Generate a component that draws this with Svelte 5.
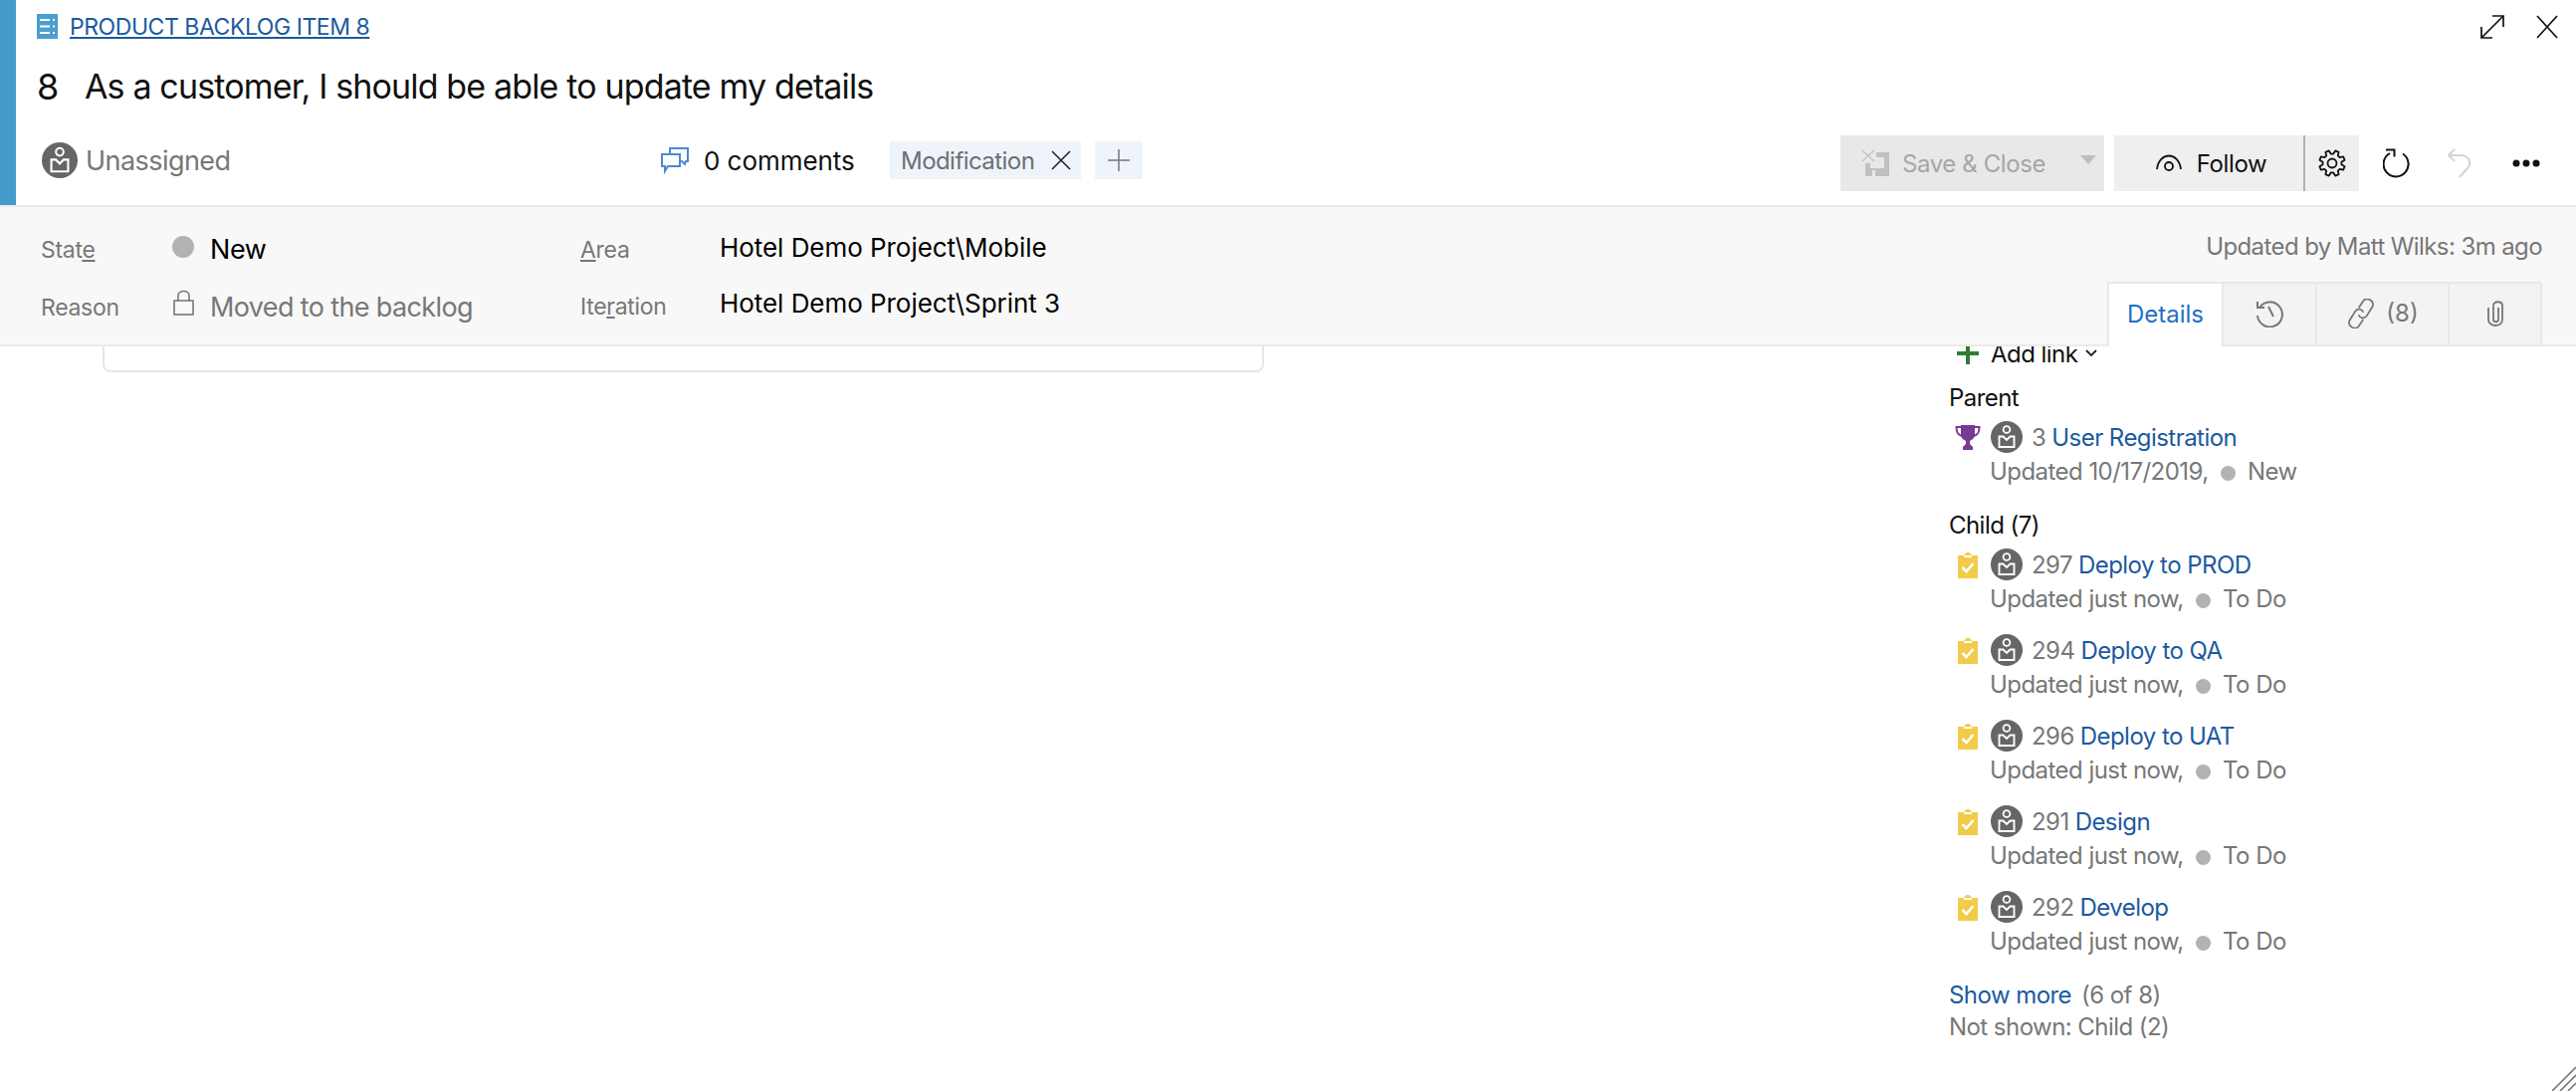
<script>
  const children = [
    { id: 297, title: 'Deploy to PROD' },
    { id: 294, title: 'Deploy to QA' },
    { id: 296, title: 'Deploy to UAT' },
    { id: 291, title: 'Design' },
    { id: 292, title: 'Develop' },
  ];

  // eight teeth round the centre of a 28 box
  const gearPoints = [];
  for (let i = 0; i < 8; i++) {
    const a = (i * 45 + 22.5);
    for (const [r, d] of [[9.5, -15], [13, -8], [13, 8], [9.5, 15]]) {
      const t = ((a + d) * Math.PI) / 180;
      gearPoints.push(`${(14 + r * Math.cos(t)).toFixed(2)},${(14 + r * Math.sin(t)).toFixed(2)}`);
    }
  }
  const gear = gearPoints.join(' ');
</script>

{#snippet avatar(size)}
  <svg class="avatar" width={size} height={size} viewBox="0 0 32 32">
    <circle cx="16" cy="16" r="16" fill="#666" />
    <circle cx="16" cy="8.500" r="3.400" fill="none" stroke="#fff" stroke-width="1.800" />
    <path d="M8.500 15.500h4l3.500 3.500 3.500-3.500h4v10.500h-15z" fill="none" stroke="#fff" stroke-width="1.900" />
  </svg>
{/snippet}

{#snippet task()}
  <svg class="type-icon" width="22" height="28" viewBox="0 0 22 28">
    <path d="M1 5h6l1-1.500C9 1.500 13 1.500 14 3.500L15 5h6v23H1z" fill="#f2cb4a" />
    <rect x="7" y="5" width="8" height="2" fill="#fff" />
    <path d="M5.500 17l4 4 7-8" fill="none" stroke="#fff" stroke-width="2.600" />
  </svg>
{/snippet}

<div class="page">
  <header class="top">
    <div class="type-row">
      <svg width="21" height="25" viewBox="0 0 21 25">
        <rect width="21" height="25" fill="#4a9fcf" />
        <path d="M3 6h10M3 12.500h10M3 19h10M16 6h2M16 12.500h2M16 19h2" stroke="#fff" stroke-width="1.800" />
      </svg>
      <a class="type-link">PRODUCT BACKLOG ITEM 8</a>
      <div class="window-btns">
        <svg width="26" height="26" viewBox="0 0 26 26" fill="none" stroke="#111" stroke-width="1.700">
          <path d="M2 24L24 2M13 2h11v11M2 13v11h11" />
        </svg>
        <svg width="24" height="24" viewBox="0 0 24 24" fill="none" stroke="#111" stroke-width="1.700">
          <path d="M2 1l20 22M22 1L2 23" />
        </svg>
      </div>
    </div>

    <div class="title-row">
      <span class="item-id">8</span>
      <span class="item-title">As a customer, I should be able to update my details</span>
    </div>

    <div class="action-row">
      <div class="assigned">
        {@render avatar(36)}
        <span>Unassigned</span>
      </div>
      <div class="comments">
        <svg width="28" height="27" viewBox="0 0 28 27" fill="none" stroke="#4a8ad4" stroke-width="2">
          <path d="M9 7V1h18v13h-2l-1 3-3-3h-2" />
          <path d="M1 7h18v12H7l-3 5v-5H1z" />
        </svg>
        <span>0 comments</span>
      </div>
      <div class="tag">
        <span>Modification</span>
        <svg width="20" height="20" viewBox="0 0 20 20" fill="none" stroke="#222" stroke-width="1.600">
          <path d="M1 1l18 18M19 1L1 19" />
        </svg>
      </div>
      <div class="tag-add">
        <svg width="24" height="24" viewBox="0 0 24 24" fill="none" stroke="#777" stroke-width="1.500">
          <path d="M12 1v22M1 12h22" />
        </svg>
      </div>

      <div class="toolbar">
        <div class="btn save">
          <svg width="30" height="28" viewBox="0 0 30 28">
            <path d="M2 1l12 11M14 1L2 12" stroke="#c4c4c4" stroke-width="1.500" fill="none" />
            <path d="M16 3h13v24H5V14h5v5h14V8h-8z" fill="#c0c0c0" />
            <rect x="12" y="21" width="3" height="6" fill="#e8e8e8" />
          </svg>
          <span>Save &amp; Close</span>
          <i class="caret"></i>
        </div>
        <div class="btn follow">
          <div class="follow-main">
            <svg width="28" height="20" viewBox="0 0 28 20" fill="none" stroke="#111" stroke-width="1.800">
              <path d="M2 16C4 -2 24 -2 26 16" />
              <circle cx="14" cy="13" r="4" />
            </svg>
            <span>Follow</span>
          </div>
          <div class="follow-gear">
            <svg width="28" height="28" viewBox="0 0 28 28" fill="none" stroke="#111" stroke-width="1.800" stroke-linejoin="round">
              <polygon points={gear} />
              <circle cx="14" cy="14" r="4.500" />
            </svg>
          </div>
        </div>
        <svg class="tool-icon" width="30" height="30" viewBox="0 0 30 30" fill="none" stroke="#111" stroke-width="2">
          <path d="M20 5.500A12.500 12.500 0 1 1 7 5" />
          <path d="M4 1.500h8.500v7" transform="translate(-1 0)" />
        </svg>
        <svg class="tool-icon undo" width="26" height="30" viewBox="0 0 26 30" fill="none" stroke="#d4d4d4" stroke-width="2">
          <path d="M2 7h12c8 0 12 8 7 13l-8 9" />
          <path d="M8 1L2 7l6 6" />
        </svg>
        <svg class="tool-icon more" width="28" height="8" viewBox="0 0 28 8" fill="#111">
          <circle cx="4" cy="4" r="3.500" /><circle cx="14" cy="4" r="3.500" /><circle cx="24" cy="4" r="3.500" />
        </svg>
      </div>
    </div>
  </header>

  <section class="fields">
    <div class="field-grid">
      <span class="label">Stat<u>e</u></span>
      <i class="dot big"></i>
      <span class="value">New</span>
      <span class="label">
        <u>A</u>rea
      </span>
      <span class="value path first">Hotel Demo Project\Mobile</span>

      <span class="label">Reason</span>
      <svg class="lock" width="21" height="26" viewBox="0 0 21 26" fill="none" stroke="#777" stroke-width="1.600">
        <rect x="1" y="11" width="19" height="14" />
        <path d="M5 11V6c0-6 11-6 11 0v5" />
      </svg>
      <span class="value muted">Moved to the backlog</span>
      <span class="label iteration">Ite<u>r</u>ation</span>
      <span class="value path second">Hotel Demo Project\Sprint 3</span>
    </div>

    <div class="field-side">
      <span class="updated">Updated by Matt Wilks: 3m ago</span>
      <div class="tabs">
        <div class="tab active">Details</div>
        <div class="tab history">
          <svg width="28" height="28" viewBox="0 0 28 28" fill="none" stroke="#777" stroke-width="2">
            <path d="M4 8A12.500 12.500 0 1 1 2 16" />
            <path d="M2 2v6h7M13 7l5 10" />
          </svg>
        </div>
        <div class="tab links">
          <svg width="30" height="30" viewBox="3 2 24 26" fill="none" stroke="#777" stroke-width="1.500">
            <path d="M13 10l4-6c3-4 10 0 8 5l-5 8c-2 3-6 2-7-1" />
            <path d="M17 20l-4 6c-3 4-10 0-8-5l5-8c2-3 6-2 7 1" />
          </svg>
          <span>(8)</span>
        </div>
        <div class="tab clip">
          <svg width="16" height="26" viewBox="0 0 16 26" fill="none" stroke="#777" stroke-width="1.800">
            <path d="M11 7v12c0 3-5 3-5 0V5c0-5 9-5 9 0v14c0 8-14 8-14 0V7" />
          </svg>
        </div>
      </div>
    </div>
  </section>

  <main class="content">
    <div class="form-col">
      <div class="card-end"></div>
    </div>
    <aside class="links-col">
      <div class="add-link">
        <svg width="22" height="22" viewBox="0 0 22 22" fill="none" stroke="#2f7d32" stroke-width="4">
          <path d="M11 0v22M0 11h22" />
        </svg>
        <span>Add link</span>
        <svg width="12" height="8" viewBox="0 0 12 8" fill="none" stroke="#222" stroke-width="1.800">
          <path d="M1 1l5 5 5-5" />
        </svg>
      </div>

      <h3 class="group parent">Parent</h3>
      <div class="link-item">
        <div class="link-top">
          <svg class="type-icon trophy" width="26" height="26" viewBox="0 0 26 26">
            <path d="M6 1h14v10c0 3-3 5-5 6v3l3 3v3H8v-3l3-3v-3c-2-1-5-3-5-6z" fill="#773b93" />
            <path d="M6 3H1.500c0 5 1 8 6 9M20 3h4.500c0 5-1 8-6 9" fill="none" stroke="#773b93" stroke-width="2" />
          </svg>
          {@render avatar(32)}
          <span class="num">3</span>
          <a class="link-name">User Registration</a>
        </div>
        <div class="link-sub">Updated 10/17/2019, <i class="dot"></i> New</div>
      </div>

      <h3 class="group child">Child (7)</h3>
      {#each children as c}
        <div class="link-item">
          <div class="link-top">
            {@render task()}
            {@render avatar(32)}
            <span class="num">{c.id}</span>
            <a class="link-name">{c.title}</a>
          </div>
          <div class="link-sub">Updated just now, <i class="dot"></i> To Do</div>
        </div>
      {/each}

      <div class="show-more"><a class="link-name">Show more</a><span>(6 of 8)</span></div>
      <div class="not-shown">Not shown: Child (2)</div>
    </aside>
  </main>

  <svg class="grip" width="26" height="26" viewBox="0 0 26 26" stroke="#777" stroke-width="1.600">
    <path d="M2 26L26 2M10 26L26 10M18 26l8-8" />
  </svg>
</div>

<style>
  :global(body) {
    margin: 0;
    background: #fff;
    font-family: Inter, "Liberation Sans", sans-serif;
    color: #111;
    overflow: hidden;
  }
  .page {
    position: relative;
    height: 1096px;
    overflow: hidden;
  }
  a {
    cursor: pointer;
  }
  .top {
    box-sizing: border-box;
    height: 206px;
    padding-left: 21px;
    border-left: 16px solid #439cca;
    position: relative;
    z-index: 2;
    background: #fff;
  }
  .type-row {
    display: flex;
    align-items: center;
    gap: 12px;
    height: 53px;
  }
  .type-link {
    font-size: 23px;
    color: #1c5a9f;
    text-decoration: underline;
    letter-spacing: -0.45px;
  }
  .window-btns {
    margin-left: auto;
    display: flex;
    align-items: center;
    gap: 30px;
    padding-right: 17px;
  }
  .title-row {
    display: flex;
    align-items: center;
    height: 67px;
    font-size: 34px;
    letter-spacing: -0.85px;
  }
  .item-id {
    width: 48px;
    font-size: 36px;
  }
  .action-row {
    display: flex;
    align-items: center;
    height: 56px;
    margin-top: 16px;
  }
  .assigned {
    display: flex;
    align-items: center;
    gap: 8px;
    width: 622px;
    margin-left: 5px;
    margin-bottom: 6px;
    font-size: 27px;
    letter-spacing: -0.55px;
    color: #777;
    flex: none;
  }
  .comments {
    display: flex;
    align-items: center;
    gap: 15px;
    width: 230px;
    flex: none;
    margin-bottom: 6px;
    font-size: 26px;
    letter-spacing: -0.05px;
  }
  .tag {
    display: flex;
    align-items: center;
    gap: 17px;
    box-sizing: border-box;
    height: 38px;
    width: 192px;
    padding-left: 11px;
    margin-bottom: 6px;
    background: #eff4fb;
    font-size: 24px;
    letter-spacing: -0.55px;
    color: #6d6f72;
    flex: none;
  }
  .tag-add {
    display: flex;
    align-items: center;
    justify-content: center;
    width: 48px;
    height: 38px;
    margin-left: 14px;
    margin-bottom: 6px;
    background: #eff4fb;
    flex: none;
  }
  .toolbar {
    margin-left: auto;
    display: flex;
    align-items: center;
    gap: 10px;
    padding-right: 36px;
  }
  .btn {
    display: flex;
    align-items: center;
    height: 56px;
    background: #efefef;
    font-size: 24px;
    letter-spacing: -0.4px;
    flex: none;
  }
  .save {
    box-sizing: border-box;
    width: 265px;
    padding-left: 20px;
    gap: 12px;
    background: #e8e8e8;
    color: #a6a6a6;
    white-space: nowrap;
  }
  .caret {
    width: 0;
    height: 0;
    margin-left: 23px;
    margin-top: -8px;
    border-left: 8px solid transparent;
    border-right: 8px solid transparent;
    border-top: 9px solid #bdbdbd;
  }
  .follow {
    width: 246px;
  }
  .follow-main {
    display: flex;
    align-items: center;
    justify-content: center;
    gap: 14px;
    box-sizing: border-box;
    width: 192px;
    height: 100%;
    padding-left: 4px;
    border-right: 2px solid #b0b0b0;
  }
  .follow-gear {
    flex: 1;
    display: flex;
    align-items: center;
    justify-content: center;
  }
  .tool-icon {
    flex: none;
    margin-left: 14px;
  }
  .undo {
    margin-left: 24px;
    margin-right: 22px;
  }
  .more {
    margin-left: 8px;
  }
  .fields {
    box-sizing: border-box;
    height: 142px;
    display: flex;
    justify-content: space-between;
    background: #f8f8f8;
    border-top: 2px solid #ebebeb;
    border-bottom: 2px solid #ebebeb;
    position: relative;
    z-index: 2;
  }
  .field-grid {
    display: grid;
    grid-template-columns: 131px 39px 372px 140px auto;
    grid-auto-rows: 58px;
    align-items: center;
    padding: 13px 0 0 41px;
    align-self: flex-start;
  }
  .label {
    font-size: 23px;
    letter-spacing: -0.3px;
    color: #777;
    padding-top: 2px;
  }
  .iteration {
    padding-top: 0;
  }
  .value {
    font-size: 27px;
    letter-spacing: -0.4px;
    color: #000;
  }
  .muted {
    color: #777;
    letter-spacing: -0.63px;
  }
  .path {
    font-size: 26px;
    letter-spacing: -0.05px;
  }
  .first {
    margin-bottom: 4px;
  }
  .second {
    margin-bottom: 8px;
  }
  .dot {
    display: inline-block;
    width: 15px;
    height: 15px;
    border-radius: 50%;
    background: #b2b2b2;
    vertical-align: -1px;
    margin: 0 6px;
  }
  .dot.big {
    width: 22px;
    height: 22px;
    margin: -4px 0 0 1px;
  }
  .lock {
    margin: -8px 0 0 2px;
  }
  .field-side {
    display: flex;
    flex-direction: column;
    align-items: flex-end;
    padding-right: 34px;
    margin-bottom: -2px;
  }
  .updated {
    margin-top: 25px;
    height: 48px;
    font-size: 24px;
    letter-spacing: -0.6px;
    color: #777;
  }
  .tabs {
    margin-top: auto;
    display: flex;
    height: 65px;
    color: #777;
    font-size: 24px;
  }
  .tab {
    box-sizing: border-box;
    display: flex;
    align-items: center;
    justify-content: center;
    gap: 10px;
    background: #f3f3f3;
    border-top: 2px solid #e8e8e8;
    border-right: 2px solid #e8e8e8;
    border-bottom: 2px solid #e8e8e8;
    padding-bottom: 2px;
  }
  .active {
    width: 117px;
    background: #fff;
    color: #1f6fc4;
    border-left: 2px solid #e8e8e8;
    border-bottom: none;
  }
  .history {
    width: 94px;
  }
  .links {
    width: 133px;
  }
  .clip {
    width: 93px;
  }
  .content {
    display: flex;
    justify-content: space-between;
  }
  .form-col {
    padding-left: 103px;
  }
  .card-end {
    width: 1167px;
    height: 26px;
    box-sizing: border-box;
    border: 2px solid #e6e6e6;
    border-top: none;
    border-radius: 0 0 8px 8px;
  }
  .links-col {
    width: 630px;
    font-size: 24px;
    letter-spacing: -0.55px;
  }
  .add-link {
    display: flex;
    align-items: center;
    height: 20px;
    padding-left: 8px;
    margin-top: -3px;
    gap: 12px;
  }
  .add-link span {
    color: #111;
  }
  .add-link svg:last-child {
    margin-left: -4px;
  }
  .group {
    margin: 0;
    font-size: 24px;
    font-weight: 400;
    line-height: 32px;
    color: #111;
  }
  .parent {
    margin-top: 19px;
  }
  .child {
    margin-top: 5px;
    margin-bottom: 5px;
  }
  .parent + .link-item {
    margin-top: 5px;
  }
  .link-item {
    height: 86px;
  }
  .link-top {
    display: flex;
    align-items: center;
    height: 36px;
    white-space: pre;
  }
  .type-icon {
    flex: none;
    margin: 0 12px 0 8px;
  }
  .trophy {
    margin: 0 10px 0 6px;
  }
  .avatar {
    flex: none;
  }
  .num {
    margin-left: 9px;
    margin-right: 6px;
    color: #777;
  }
  .link-name {
    color: #1c5a9f;
  }
  .link-sub {
    height: 34px;
    line-height: 34px;
    padding-left: 41px;
    color: #777;
  }
  .show-more {
    display: flex;
    gap: 10px;
    line-height: 32px;
    margin-top: 5px;
    color: #777;
  }
  .not-shown {
    line-height: 31px;
    color: #777;
  }
  .grip {
    position: absolute;
    right: 0;
    bottom: 0;
  }
</style>
